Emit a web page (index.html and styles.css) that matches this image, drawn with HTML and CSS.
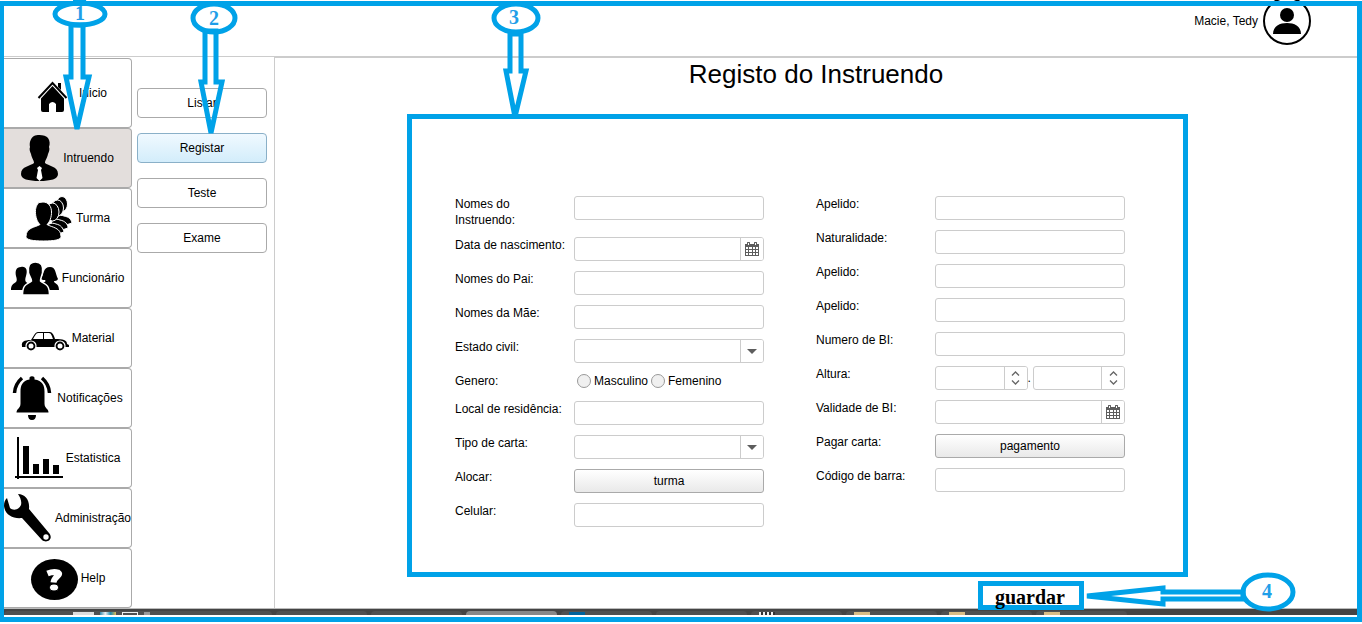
FILE: index.html
```html
<!DOCTYPE html>
<html lang="pt">
<head>
<meta charset="utf-8">
<title>Registo do Instruendo</title>
<link rel="stylesheet" href="styles.css">
</head>
<body>
<svg class="defs" width="0" height="0" aria-hidden="true">
  <symbol id="calendar" viewBox="0 0 14 14">
    <path fill="#5d5d5d" d="M0 2h2V1a1 1 0 0 1 3 0v1h4V1a1 1 0 0 1 3 0v1h2v12H0z"/>
    <path fill="#fff" d="M3 1h1v2H3zM10 1h1v2h-1zM1 5h2v2H1zM4 5h3v2H4zM8 5h2v2H8zM11 5h2v2h-2zM1 8h2v2H1zM4 8h3v2H4zM8 8h2v2H8zM11 8h2v2h-2zM1 11h2v2H1zM4 11h3v2H4zM8 11h2v2H8zM11 11h2v2h-2z"/>
  </symbol>
  <symbol id="up" viewBox="0 0 8 5"><path d="M.5 4.500 4 1l3.500 3.500" fill="none" stroke="#666" stroke-width="1.300"/></symbol>
  <symbol id="down" viewBox="0 0 8 5"><path d="M.5 .5 4 4 7.500 .5" fill="none" stroke="#666" stroke-width="1.300"/></symbol>
</svg>

<div class="app">
  <header class="topbar">
    <span>Macie, Tedy</span>
    <svg class="avatar" viewBox="0 0 48 48" aria-hidden="true">
      <circle cx="24" cy="24" r="23" fill="#fff" stroke="#000" stroke-width="2"/>
      <circle cx="24" cy="18" r="7"/>
      <path d="M10 37c0-8 7-11 14-11s14 3 14 11z"/>
    </svg>
  </header>

  <div class="body">
    <nav class="sidebar">
      <button class="nav-item tall"><svg width="48" viewBox="0 0 48 48"><path d="M30 14h3v7l-3-3z"/><path d="M10.500 29 24.500 14 38.500 29" fill="none" stroke="#000" stroke-width="2"/><path d="M24.500 17 36 29.500V41q0 2-2 2h-6v-8q-3.500-4-7 0v8h-6q-2 0-2-2V29.500z"/></svg>Inicio</button>
      <button class="nav-item active"><svg width="39" viewBox="9 0 39 48"><path d="M22 2c4-2 12-1 14 2 2 3 2 6 1 9 1 2 0 5-1 7-1 5-3 6-3 9 3 3 13 3 13 11 0 5-7 7-18.500 7S9 45 9 40c0-8 10-8 13-11 0-3-2-4-3-9-1-2-2-5-1-7-1-5 1-9 4-11z"/><path fill="#fff" d="m25 34 2.500-2 2.500 2-1 2 1.500 8-3 3-3-3L26 36z"/></svg>Intruendo</button>
      <button class="nav-item"><svg width="48" viewBox="0 0 48 48"><g stroke="#fff" stroke-width="1"><path d="M30 27c0-4 4-7 9-5 5 1 7 3 8 7-5 2-11 3-17 2z"/><ellipse cx="37" cy="10" rx="5.500" ry="7.500"/><path d="M26 31c0-5 4-7 9-5 5 1 8 4 8 8-5 2-11 3-17 2z"/><ellipse cx="32.500" cy="14" rx="6" ry="8"/><path d="M22 35c0-5 4-7 9-5 5 1 7 4 8 8-5 2-11 3-17 2z"/><ellipse cx="27.500" cy="18" rx="6.500" ry="9"/><path d="M14 8.500c-2 2-4 5-3.500 11 .5 6 2.500 9 4.500 11-5 3-14 3-14 12C1 46 8 47 18.500 47S36 46 36 42.500c0-9-9-9-14-12 2-2 4-5 4.500-11C27 12 23 8 18 8z"/></g></svg>Turma</button>
      <button class="nav-item"><svg width="48" viewBox="0 0 48 48"><path d="M10 13c5-1 7 3 5 9-1 3-1 5 0 6 3 2 5 2 5 8H0c0-5 2-6 5-8 1-1 1-3 0-6-1-5 0-9 5-9zM39 13c6 0 5 6 8 12-1 2-3 2-4 2 0 3 5 2 5 9H30v-7c5-1 5-2 4-3-1 0-3 0-4-1 3-5 2-12 9-12z"/><path stroke="#fff" stroke-width="1.500" d="M24.500 8c6 0 8 4 7 11-1 4-2 5-2 8 3 3 9 2 9 14h-27c0-12 6-11 9-14 0-3-2-4-3-8-1-7 1-11 7-11z"/></svg>Funcionário</button>
      <button class="nav-item"><svg width="48" viewBox="0 0 48 48"><path d="M1 32c-1-4 2-6 9-6 3-4 4-8 7-8h12c2 0 4 3 5 7 8 0 12 1 12 5l2 1v2H1z"/><path fill="#fff" d="M12 25c2-3 3-6 5-6h5v6zM23 19h5c2 0 3 3 4 6h-9z"/><g fill="#000" stroke="#fff" stroke-width="1.200"><circle cx="10" cy="32" r="5"/><circle cx="39" cy="32" r="5"/></g><circle cx="10" cy="32" r="2.500" fill="#fff"/><circle cx="39" cy="32" r="2.500" fill="#fff"/></svg>Material</button>
      <button class="nav-item"><svg width="42" viewBox="6 0 42 48"><path d="M23.500 3.500a3 3 0 0 1 5 0v2c8 1 10 6 10 12v12c0 5 4 5 4 9h-32c0-4 4-4 4-9v-12c0-6 2-11 9-12zM22 41h8q0 5-4 5t-4-5z"/><path d="M16 4q-7 6-7.500 15M36 4q7 6 7.500 15" fill="none" stroke="#000" stroke-width="3.500"/></svg>Notificações</button>
      <button class="nav-item"><svg width="48" viewBox="0 0 48 48"><path d="M2 3h2v42H2zM0 42h48v2H0zM8 12h6v28H8zM18 30h6v10h-6zM28 25h6v15h-6zM38 31h6v9h-6z"/></svg>Estatistica</button>
      <button class="nav-item"><svg width="48" viewBox="0 0 48 48"><path d="M14 0c7 0 12 6 11 15l20 24c5 6-2 11-7 7L18 24C9 25 1 21 0 12c0-4 1-6 3-8l3 10c3 3 9 2 11-3 1-4-1-8-3-11z"/><circle cx="42" cy="43" r="2.700" fill="#fff"/></svg>Administração</button>
      <button class="nav-item"><svg width="48" viewBox="0 0 48 48"><ellipse cx="24.500" cy="25.500" rx="23.500" ry="20.500"/><path d="M17.500 19.500q6-2.500 10.500-1c4 2.500-4 4-4.500 10" fill="none" stroke="#fff" stroke-width="6"/><ellipse cx="24" cy="33.500" rx="4.500" ry="3.500" fill="#fff" stroke="#000"/></svg>Help</button>
    </nav>

    <nav class="submenu">
      <button class="sub-item">Listar</button>
      <button class="sub-item selected">Registar</button>
      <button class="sub-item">Teste</button>
      <button class="sub-item">Exame</button>
    </nav>

    <main class="content">
      <h1>Registo do Instruendo</h1>
      <form class="panel">
        <div class="column">
          <div class="row"><label for="nome">Nomes do Instruendo:</label><input class="field" id="nome"></div>
          <div class="row"><label for="nasc">Data de nascimento:</label><div class="field group"><input id="nasc"><button type="button" class="addon" aria-label="Calendário"><svg class="cal"><use href="#calendar"/></svg></button></div></div>
          <div class="row"><label for="pai">Nomes do Pai:</label><input class="field" id="pai"></div>
          <div class="row"><label for="mae">Nomes da Mãe:</label><input class="field" id="mae"></div>
          <div class="row"><label for="civil">Estado civil:</label><div class="field group"><select id="civil"><option></option></select><span class="addon caret"></span></div></div>
          <div class="row short"><span>Genero:</span><div class="radios"><input type="radio" name="genero" id="masc"><label for="masc">Masculino</label><input type="radio" name="genero" id="fem"><label for="fem">Femenino</label></div></div>
          <div class="row"><label for="local">Local de residência:</label><input class="field" id="local"></div>
          <div class="row"><label for="tipo">Tipo de carta:</label><div class="field group"><select id="tipo"><option></option></select><span class="addon caret"></span></div></div>
          <div class="row"><label for="alocar">Alocar:</label><button type="button" class="action" id="alocar">turma</button></div>
          <div class="row"><label for="cel">Celular:</label><input class="field" id="cel"></div>
        </div>
        <div class="column">
          <div class="row"><label for="ap1">Apelido:</label><input class="field" id="ap1"></div>
          <div class="row"><label for="nat">Naturalidade:</label><input class="field" id="nat"></div>
          <div class="row"><label for="ap2">Apelido:</label><input class="field" id="ap2"></div>
          <div class="row"><label for="ap3">Apelido:</label><input class="field" id="ap3"></div>
          <div class="row"><label for="bi">Numero de BI:</label><input class="field" id="bi"></div>
          <div class="row"><label for="alt">Altura:</label><div class="height">
            <div class="field group"><input id="alt"><span class="addon spin"><button type="button" aria-label="Mais"><svg><use href="#up"/></svg></button><button type="button" aria-label="Menos"><svg><use href="#down"/></svg></button></span></div>
            <span class="dot">.</span>
            <div class="field group"><input aria-label="Centímetros"><span class="addon spin"><button type="button" aria-label="Mais"><svg><use href="#up"/></svg></button><button type="button" aria-label="Menos"><svg><use href="#down"/></svg></button></span></div>
          </div></div>
          <div class="row"><label for="val">Validade de BI:</label><div class="field group"><input id="val"><button type="button" class="addon" aria-label="Calendário"><svg class="cal"><use href="#calendar"/></svg></button></div></div>
          <div class="row"><label for="pagar">Pagar carta:</label><button type="button" class="action" id="pagar">pagamento</button></div>
          <div class="row"><label for="barra">Código de barra:</label><input class="field" id="barra"></div>
        </div>
      </form>
      <button class="save">guardar</button>
    </main>
  </div>

  <div class="taskbar">
    <div class="tray"><i class="chip light"></i><i class="chip multi"></i><i class="chip outline"></i><i class="chip dim"></i></div>
    <div class="tab"></div><div class="tab"></div><div class="tab current"></div>
    <div class="tab"><i class="chip blue"></i></div><div class="tab"></div>
    <div class="tab"><i class="chip stripes"></i></div>
    <div class="tab"><i class="chip sand"></i></div><div class="tab"><i class="chip sand"></i></div><div class="tab"><i class="chip sand"></i></div>
  </div>

  <div class="frame"></div>

  <svg class="callout one" width="60" height="134" viewBox="0 0 60 134">
    <path d="M22 0h13v4H22z" class="solid"/>
    <ellipse cx="29" cy="14" rx="25" ry="11"/>
    <path d="M20 25V77H15L26 129 38 77H32V25z"/>
    <text x="29" y="20">1</text>
  </svg>
  <svg class="callout two" width="50" height="138" viewBox="0 0 50 138">
    <ellipse cx="24" cy="18" rx="21" ry="14"/>
    <path d="M15 31V82H11L21 133 32 82H26V31z"/>
    <text x="24" y="25">2</text>
  </svg>
  <svg class="callout three" width="54" height="124" viewBox="0 0 54 124">
    <ellipse cx="26" cy="18" rx="22" ry="14"/>
    <path d="M20 34V71H16L25 117 36 71H31V34z"/>
    <text x="24" y="24">3</text>
  </svg>
  <svg class="callout four" width="216" height="44" viewBox="0 0 216 44">
    <path d="M162 22H82V18L6 26 82 34V29H162z"/>
    <ellipse cx="187" cy="22" rx="25" ry="17"/>
    <text x="186" y="28">4</text>
  </svg>
</div>
</body>
</html>
```
FILE: styles.css
```css
* { box-sizing: border-box; }

body {
  margin: 0;
  background: #fff;
  color: #000;
  font: 12px/16px "Liberation Sans", Arial, sans-serif;
}

button, input, select {
  font: inherit;
  color: inherit;
}

.defs { position: absolute; }

.app {
  position: relative;
  display: flex;
  flex-direction: column;
  min-height: 100vh;
  padding: 0 5px 9px 4px;
  overflow: hidden;
}

/* Top bar */
.topbar {
  display: flex;
  align-items: center;
  justify-content: flex-end;
  gap: 5px;
  height: 57px;
  padding: 0 46px 14px 0;
  border-bottom: 1px solid #ccc;
}

.avatar {
  width: 48px;
  height: 48px;
}

.body {
  display: flex;
  flex: 1;
}

/* Main navigation */
.sidebar {
  display: flex;
  flex-direction: column;
  width: 128px;
  padding-top: 1px;
}

.nav-item {
  display: flex;
  align-items: center;
  justify-content: center;
  gap: 3px;
  height: 60px;
  padding: 0;
  border: 1px solid #aaa;
  border-left: 0;
  border-radius: 0 4px 4px 0;
  background: #fff;
  white-space: nowrap;
}

.nav-item.tall { height: 70px; }
.nav-item.active { background: #e3dedc; }

.nav-item svg {
  flex: none;
  height: 48px;
}

/* Secondary navigation */
.submenu {
  display: flex;
  flex-direction: column;
  gap: 15px;
  width: 142px;
  padding: 31px 7px 0 5px;
}

.sub-item {
  height: 30px;
  padding: 0;
  border: 1px solid #aaa;
  border-radius: 4px;
  background: #fff;
}

.sub-item.selected {
  border-color: #8ab0c8;
  background: linear-gradient(#f0f9ff, #d3edfb);
}

/* Content */
.content {
  display: flex;
  flex: 1;
  flex-direction: column;
  border: solid #ccc;
  border-width: 1px 0 0 1px;
}

h1 {
  margin: 0;
  padding: 1px 0 24px;
  font-size: 26px;
  font-weight: 400;
  line-height: 31px;
  text-align: center;
}

.panel {
  display: grid;
  grid-template-columns: 1fr 1fr;
  gap: 52px;
  margin: 0 169px 4px 132px;
  padding: 77px 58px 44px 43px;
  border: 5px solid #00a2e8;
}

.column {
  display: flex;
  flex-direction: column;
  gap: 9px;
}

.row {
  display: grid;
  grid-template-columns: 114px minmax(0, 1fr);
  column-gap: 5px;
  align-items: start;
  min-height: 25px;
}

.row.short { min-height: 19px; }

.field {
  width: 100%;
  height: 24px;
  border: 1px solid #ccc;
  border-radius: 3px;
  background: #fff;
}

.group {
  display: flex;
  overflow: hidden;
}

.group input, .group select {
  flex: 1;
  min-width: 0;
  border: 0;
  background: none;
  appearance: none;
}

.addon {
  display: flex;
  align-items: center;
  justify-content: center;
  width: 23px;
  padding: 0;
  border: 0;
  border-left: 1px solid #ccc;
  background: #fff;
}

.cal {
  width: 14px;
  height: 14px;
}

.caret::before {
  content: "";
  border: solid transparent;
  border-width: 5px 5px 0;
  border-top-color: #5d5d5d;
}

.spin {
  flex-direction: column;
  gap: 4px;
}

.spin button {
  display: flex;
  padding: 0;
  border: 0;
  background: none;
}

.spin svg {
  width: 9px;
  height: 5px;
}

.height {
  display: grid;
  grid-template-columns: 1fr 5px 1fr;
  align-items: center;
}

.action {
  height: 24px;
  padding: 0;
  border: 1px solid #aaa;
  border-radius: 3px;
  background: linear-gradient(#fff, #e9e9e9);
}

.radios {
  display: flex;
  align-items: center;
  gap: 3px;
  padding-left: 3px;
}

.radios input {
  width: 14px;
  height: 14px;
  margin: 0;
  border: 1px solid #999;
  border-radius: 50%;
  background: #f0f0f0;
  appearance: none;
}

.save {
  position: relative;
  z-index: 2;
  align-self: flex-end;
  width: 106px;
  height: 29px;
  margin: 0 273px -2px 0;
  padding: 3px 2px 0 0;
  border: 5px solid #00a2e8;
  background: #fff;
  font: bold 20px/16px "Liberation Serif", "Times New Roman", serif;
}

/* Desktop task bar */
.taskbar {
  display: flex;
  gap: 4px;
  height: 7px;
  padding-top: 2px;
  border-top: 1px solid #bbb;
  background: #444;
}

.tray, .tab {
  display: flex;
  width: 91px;
  padding: 1px 8px 0;
  border-radius: 4px 4px 0 0;
  background: #505050;
}

.tray {
  gap: 6px;
  width: 268px;
  padding-left: 69px;
}

.tab.current { background: #888; }

.chip {
  width: 16px;
  height: 3px;
}

.light { width: 21px; background: #ddd; }
.multi { background: linear-gradient(90deg, #38a, #eee, #28a, #db5); }
.outline { border: 1px solid #eee; border-bottom: 0; }
.dim { width: 6px; background: #999; }
.blue { background: #00629b; }
.sand { background: #d9bd85; }
.stripes { background: repeating-linear-gradient(90deg, #eee 0 2px, #333 2px 4px); }

/* Marker layer drawn over the screen */
.frame {
  position: absolute;
  inset: 1px 0 2px;
  border: 5px solid #00a2e8;
  border-left-width: 4px;
  pointer-events: none;
}

.callout {
  position: absolute;
  z-index: 3;
  fill: none;
  stroke: #00a2e8;
  stroke-width: 5;
  pointer-events: none;
}

.callout .solid { fill: #00a2e8; stroke: none; }

.callout text {
  fill: #1f9ee8;
  stroke: none;
  font: bold 20px "Liberation Serif", "Times New Roman", serif;
  text-anchor: middle;
}

.one { top: 0; left: 51px; }
.two { top: 0; left: 190px; }
.three { top: 0; left: 490px; }
.four { right: 65px; bottom: 10px; }
```
